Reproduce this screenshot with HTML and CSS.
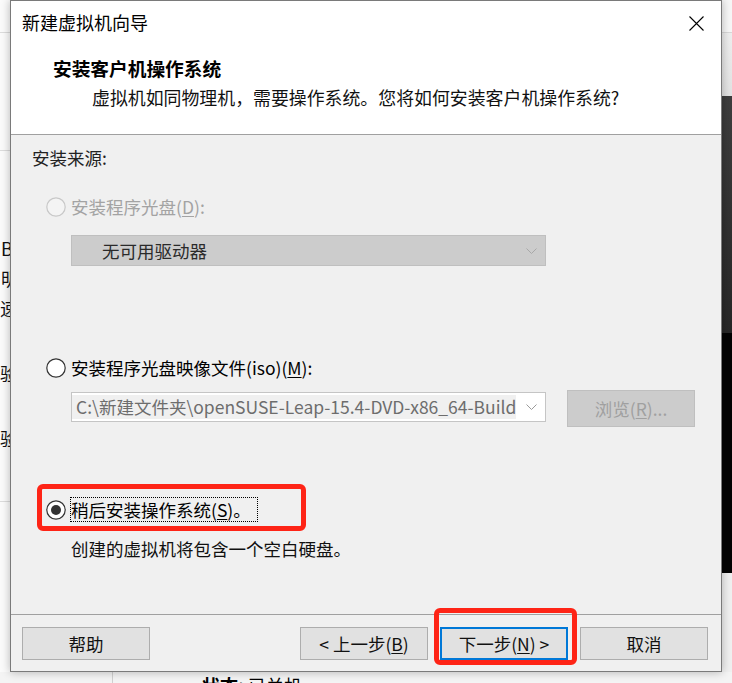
FILE: index.html
```html
<!DOCTYPE html>
<html lang="zh-CN">
<head>
<meta charset="utf-8">
<title>新建虚拟机向导</title>
<link rel="stylesheet" href="styles.css">
</head>
<body>
<div class="screen">
  <div class="backdrop">
    <div class="bd-main">
      <div class="bd-left">
        <div class="bl-top"></div>
        <div class="bl-second"></div>
        <div class="bl-list">
          <div class="bl-item b1">B</div>
          <div class="bl-item b2">明</div>
          <div class="bl-item b3">速</div>
          <div class="bl-item b4">验</div>
          <div class="bl-item b5">验</div>
        </div>
        <div class="bl-rest"></div>
      </div>
      <div class="bd-center"></div>
      <div class="bd-right">
        <div class="br-top"></div>
        <div class="br-light"></div>
        <div class="br-dark"></div>
        <div class="br-black"></div>
        <div class="br-bottom"></div>
      </div>
    </div>
    <div class="bd-status">
      <div class="bs-side"></div>
      <div class="bs-text"><b>状态:</b> 已关机</div>
    </div>
  </div>

  <div class="dialog">
    <div class="titlebar">
      <span class="title">新建虚拟机向导</span>
      <svg class="close" width="15" height="15" viewBox="0 0 15 15"><path d="M0.5 0.5 L14.5 14.5 M14.5 0.5 L0.5 14.5" stroke="#000" stroke-width="1.1" fill="none"/></svg>
    </div>
    <div class="header">
      <div class="heading">安装客户机操作系统</div>
      <div class="subtitle">虚拟机如同物理机，需要操作系统。您将如何安装客户机操作系统?</div>
    </div>
    <div class="body">
      <div class="source">安装来源:</div>

      <div class="radio-row row1 disabled">
        <svg class="radio" width="20" height="20" viewBox="0 0 20 20"><circle cx="10" cy="10" r="9.2" fill="#f4f4f4" stroke="#c8c8c8" stroke-width="1.2"/></svg>
        <span class="rlabel">安装程序光盘(<u>D</u>):</span>
      </div>
      <div class="dropdown">
        <span class="dd-text">无可用驱动器</span>
        <svg class="chev" width="11" height="6" viewBox="0 0 11 6"><polyline points="0.5,0.5 5.5,5.5 10.5,0.5" fill="none" stroke="#a8a8a8" stroke-width="1"/></svg>
      </div>

      <div class="radio-row row2">
        <svg class="radio" width="20" height="20" viewBox="0 0 20 20"><circle cx="10" cy="10" r="9.2" fill="#fff" stroke="#333" stroke-width="1.2"/></svg>
        <span class="rlabel">安装程序光盘映像文件(iso)(<u>M</u>):</span>
      </div>
      <div class="combo-row">
        <div class="combo">
          <span class="combo-text">C:\新建文件夹\openSUSE-Leap-15.4-DVD-x86_64-Build</span>
          <svg class="chev" width="11" height="6" viewBox="0 0 11 6"><polyline points="0.5,0.5 5.5,5.5 10.5,0.5" fill="none" stroke="#9a9a9a" stroke-width="1"/></svg>
        </div>
        <div class="browse">浏览(<u>R</u>)...</div>
      </div>

      <div class="radio-row row3">
        <svg class="radio" width="20" height="20" viewBox="0 0 20 20"><circle cx="10" cy="10" r="9.2" fill="#fff" stroke="#333" stroke-width="1.2"/><circle cx="10" cy="10" r="5" fill="#333"/></svg>
        <span class="rlabel focus">稍后安装操作系统(<u>S</u>)。</span>
      </div>
      <div class="desc">创建的虚拟机将包含一个空白硬盘。</div>
    </div>
    <div class="footer">
      <div class="btn">帮助</div>
      <div class="btn-group">
        <div class="btn">&lt; 上一步(<u>B</u>)</div>
        <div class="btn default">下一步(<u>N</u>) &gt;</div>
        <div class="btn">取消</div>
      </div>
    </div>

    <div class="mark mark-later"></div>
    <div class="mark mark-next"></div>
  </div>
</div>
</body>
</html>
```
FILE: styles.css
```css
html, body {
  margin: 0;
  padding: 0;
}
body {
  width: 732px;
  height: 683px;
  overflow: hidden;
  font-family: "Noto Sans CJK SC", "Noto Sans", sans-serif;
  background: #f2f2f2;
}
.screen {
  position: relative;
  width: 732px;
  height: 683px;
  overflow: hidden;
}

/* ---------- background application ---------- */
.backdrop {
  display: flex;
  flex-direction: column;
  width: 732px;
  height: 683px;
}
.bd-main {
  display: flex;
  height: 672px;
}
.bd-left {
  width: 40px;
  display: flex;
  flex-direction: column;
  background: #fbfbfb;
}
.bl-top {
  height: 32px;
  border-bottom: 1px solid #dcdcdc;
}
.bl-second {
  height: 117px;
  border-bottom: 1px solid #dcdcdc;
}
.bl-list {
  height: 351px;
  border-bottom: 1px solid #dcdcdc;
  display: flex;
  flex-direction: column;
  font-size: 18px;
  line-height: 30px;
  color: #111;
  padding-top: 82px;
  box-sizing: border-box;
}
.bl-item {
  white-space: nowrap;
}
.b1 { padding-left: 1px; }
.b2 { padding-left: 1px; }
.b3 { padding-left: 0; }
.b4 { margin-top: 35px; }
.b5 { margin-top: 35px; }
.bl-rest {
  flex: 1;
}
.bd-center {
  flex: 1;
  background: #f3f3f3;
}
.bd-right {
  width: 10px;
  display: flex;
  flex-direction: column;
}
.br-top {
  height: 32px;
  background: #f7f7f7;
  border-bottom: 1px solid #d8d8d8;
}
.br-light {
  height: 63px;
  background: linear-gradient(#eeeeee, #e2e2e2);
}
.br-dark {
  height: 237px;
  background: linear-gradient(#3e3e3e, #272727);
}
.br-black {
  height: 240px;
  background: #030303;
}
.br-bottom {
  flex: 1;
  background: #f0f0f0;
}
.bd-status {
  flex: 1;
  display: flex;
  background: #f4f4f4;
  overflow: hidden;
}
.bs-side {
  width: 112px;
  border-right: 1px solid #d0d0d0;
}
.bs-text {
  padding: 1px 0 0 89px;
  font-size: 18px;
  line-height: 24px;
  color: #000;
  white-space: nowrap;
}

/* ---------- dialog window ---------- */
.dialog {
  position: absolute;
  left: 10px;
  top: 0;
  width: 712px;
  height: 672px;
  box-sizing: border-box;
  border: 1px solid #7a7a7a;
  background: #f0f0f0;
  display: flex;
  flex-direction: column;
  box-shadow: 0 0 9px rgba(0, 0, 0, 0.28);
  font-size: 17.5px;
  color: #000;
}
u {
  text-decoration-thickness: 1px;
  text-underline-offset: 2px;
}
.titlebar {
  height: 43px;
  flex: none;
  background: #fff;
  display: flex;
  align-items: center;
  justify-content: space-between;
  padding: 0 17px 0 11px;
}
.title {
  font-size: 18px;
  line-height: 24px;
  margin-top: -1px;
}
.close {
  display: block;
  margin-top: 1px;
}
.header {
  flex: none;
  background: #fff;
  padding: 12px 0 25px 42px;
  border-bottom: 1px solid #a0a0a0;
}
.heading {
  font-weight: bold;
  font-size: 18.7px;
  line-height: 24px;
}
.subtitle {
  margin-top: 5px;
  padding-left: 39px;
  font-size: 17.9px;
  line-height: 24px;
  color: #111;
}
.body {
  flex: 1;
  display: flex;
  flex-direction: column;
  padding: 11px 0 0 21px;
  line-height: 24px;
}
.source {
  line-height: 24px;
  color: #222;
}
.radio-row {
  display: flex;
  align-items: center;
  gap: 4px;
  margin-left: 14px;
  height: 24px;
}
.radio {
  display: block;
  flex: none;
}
.rlabel {
  border: 1px solid transparent;
  padding: 0 1px 0 0;
  line-height: 22px;
}
.row1 { margin-top: 25px; }
.row2 { margin-top: 90px; }
.row3 {
  margin-top: 70px;
  height: 25px;
}
.row3 .rlabel {
  line-height: 23px;
  padding-right: 6px;
}
.disabled .rlabel {
  color: #a3a3a3;
}
.rlabel.focus {
  border: 1px dotted #000;
}
.dropdown {
  margin: 16px 0 0 39px;
  width: 475px;
  height: 31px;
  box-sizing: border-box;
  border: 1px solid #bfbfbf;
  background: #cccccc;
  display: flex;
  align-items: center;
  justify-content: space-between;
  padding: 0 8px 0 30px;
}
.dd-text {
  color: #2a2a2a;
  line-height: 24px;
}
.chev {
  display: block;
  flex: none;
}
.combo-row {
  margin: 10px 0 0 39px;
  display: flex;
  align-items: flex-start;
  gap: 21px;
}
.combo {
  margin-top: 2px;
  width: 475px;
  height: 30px;
  box-sizing: border-box;
  border: 1px solid #c5c5c5;
  background: #fff;
  display: flex;
  align-items: center;
  padding: 0 8px 0 0;
  gap: 10px;
}
.combo-text {
  flex: 1;
  min-width: 0;
  height: 24px;
  background: #f0f0f0;
  color: #6d6d6d;
  line-height: 24px;
  white-space: nowrap;
  overflow: hidden;
  padding-left: 4px;
}
.browse {
  width: 128px;
  height: 37px;
  box-sizing: border-box;
  border: 1px solid #bfbfbf;
  background: #cccccc;
  color: #a0a0a0;
  display: flex;
  align-items: center;
  justify-content: center;
}
.desc {
  margin: 15px 0 0 39px;
  line-height: 24px;
  color: #111;
}
.footer {
  flex: none;
  height: 57px;
  box-sizing: border-box;
  border-top: 1px solid #a0a0a0;
  padding: 12px 13px 0 11px;
  display: flex;
  justify-content: space-between;
  align-items: flex-start;
}
.btn-group {
  display: flex;
  gap: 12px;
}
.btn {
  width: 128px;
  height: 33px;
  box-sizing: border-box;
  border: 1px solid #adadad;
  background: #e1e1e1;
  display: flex;
  align-items: center;
  justify-content: center;
  line-height: 24px;
  color: #111;
}
.btn.default {
  border: 2px solid #0078d7;
}

/* ---------- red annotation marks ---------- */
.mark {
  position: absolute;
  box-sizing: border-box;
  border: 5px solid #fe2416;
  border-radius: 6px;
}
.mark-later {
  left: 26px;
  top: 483px;
  width: 269px;
  height: 47px;
}
.mark-next {
  left: 423px;
  top: 607px;
  width: 143px;
  height: 57px;
}
```
